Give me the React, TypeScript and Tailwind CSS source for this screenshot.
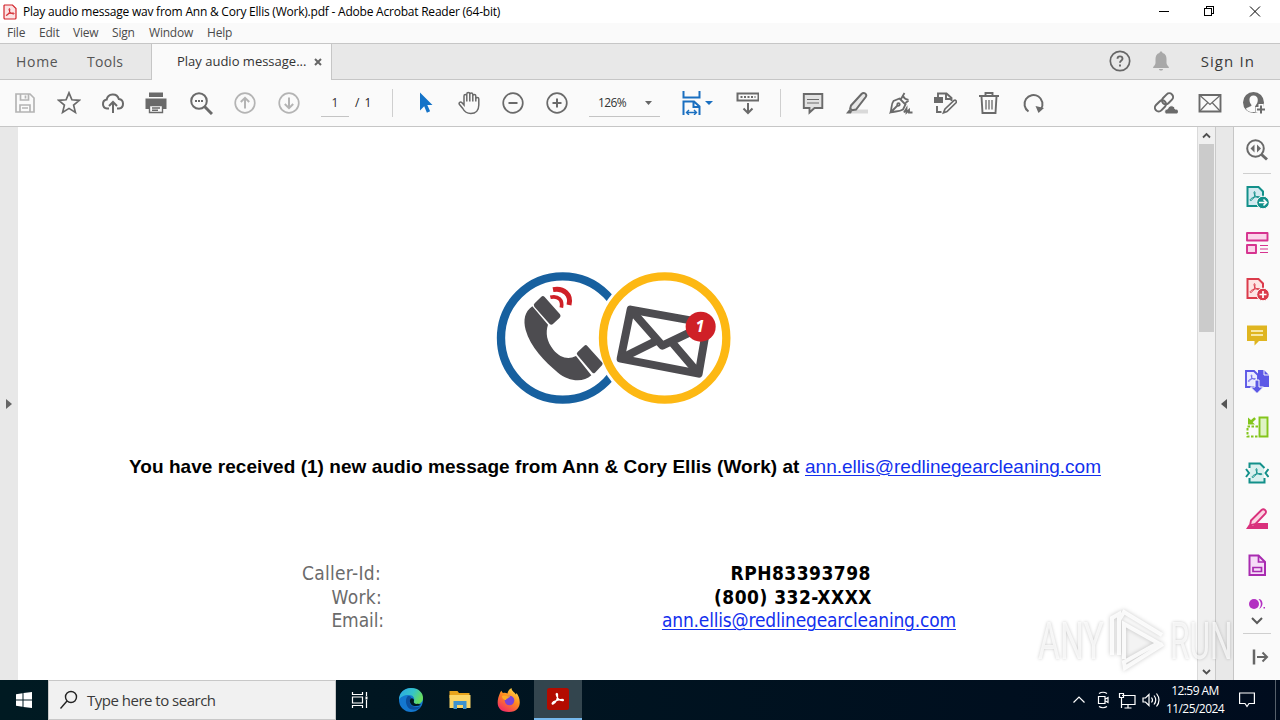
import type { ReactNode } from "react";
import clsx from "clsx";

type IconProps = {
  children: ReactNode;
  size?: number;
  className?: string;
};

// 24x24 line icon, colour comes from the text colour
const Icon = ({ children, size = 24, className }: IconProps) => (
  <svg
    width={size}
    height={size}
    viewBox="0 0 24 24"
    fill="none"
    stroke="currentColor"
    strokeWidth={1.7}
    className={clsx("shrink-0", className)}
  >
    {children}
  </svg>
);

const ToolButton = ({
  children,
  disabled = false,
  className = "text-[#6a6a6a]",
}: {
  children: ReactNode;
  disabled?: boolean;
  className?: string;
}) => (
  <button
    className={clsx(
      "flex h-full w-11 shrink-0 items-center justify-center",
      disabled ? "text-[#b4b4b4]" : className,
    )}
  >
    <Icon>{children}</Icon>
  </button>
);

const Divider = () => <div className="h-7 w-px shrink-0 bg-[#cfcfcf]" />;

const AcrobatMark = () => (
  <path
    d="M6.500 16c2.500-1.500 4.300-4.500 4-8 0-1.200-1.200-1.200-1 .2.300 3 2.300 5 5 5 1.300 0 1.300-1.200-.2-1.200-2.600 0-5.600.8-7.600 2-1.600 1.200-1.300 2.300-.2 2z"
    strokeWidth={1}
  />
);

const TitleBar = () => (
  <div className="flex h-[23px] items-center bg-white text-black">
    <svg width="14" height="16" viewBox="0 0 14 16" className="ml-[3px]">
      <path
        d="M1.500 1h8L13 4.500V14a1 1 0 0 1-1 1H2a1 1 0 0 1-1-1V1.500z"
        fill="#fbe3e4"
        stroke="#d2232a"
        strokeWidth="1.200"
      />
      <path
        d="M3.500 11.500C5.500 11 7 8 6.800 5.200c0-1-1-.8-.8.300C6.300 8 8 9.800 10.500 10c1 0 1-1-.3-1-2.300 0-4.700.6-6.300 1.500-.8.500-.8 1-.4 1z"
        fill="none"
        stroke="#d2232a"
        strokeWidth="1"
      />
    </svg>
    <span className="ml-[6px] text-[12px] tracking-[-0.22px]">
      Play audio message wav from Ann &amp; Cory Ellis (Work).pdf - Adobe
      Acrobat Reader (64-bit)
    </span>
    <svg
      width="110"
      height="20"
      viewBox="0 0 110 20"
      className="mr-[13px] ml-auto"
      fill="none"
      stroke="black"
      shapeRendering="crispEdges"
    >
      <path d="M2 9.500h10" />
      <path d="M47.500 6.500h7v7h-7zM49.500 6V4.500h7v7H55" />
      <path d="M93 4.500l10 10M103 4.500l-10 10" shapeRendering="auto" />
    </svg>
  </div>
);

const MenuBar = () => (
  <div className="flex h-5 items-center bg-[#fafafa] text-[12px] text-[#4a4a4a]">
    <span className="w-8 pl-[7px] tracking-[-0.2px]">File</span>
    <span className="w-[34px] pl-[7px] tracking-[-0.2px]">Edit</span>
    <span className="w-[39px] pl-[7px] tracking-[-0.2px]">View</span>
    <span className="w-[37px] pl-[7px] tracking-[-0.2px]">Sign</span>
    <span className="w-[58px] pl-[7px] tracking-[-0.2px]">Window</span>
    <span className="pl-[7px] tracking-[-0.2px]">Help</span>
  </div>
);

const TabBar = () => (
  <div className="flex h-[37px] border-y border-[#c6c6c6] bg-[#e8e8e8] text-[#555]">
    <div className="flex w-[151px] items-center text-[14px]">
      <span className="w-[71px] pl-4 tracking-[0.7px]">Home</span>
      <span className="pl-4 tracking-[0.3px]">Tools</span>
    </div>
    <div className="-mb-px flex w-[181px] items-center border-x border-[#c6c6c6] bg-[#fafafa] pl-[25px] text-[13px] text-[#333]">
      <span className="w-[137px] tracking-[0px]">Play audio message...</span>
      <svg width="8" height="8" viewBox="0 0 8 8" stroke="#666" strokeWidth="2">
        <path d="M1 1l6 6M7 1L1 7" />
      </svg>
    </div>
    <div className="ml-auto flex items-center pr-[25px]">
      <Icon className="mr-[17px] text-[#666]">
        <circle cx="12" cy="11" r="9.700" />
        <path
          d="M9.500 8.800c0-3.200 5-3.200 5 0 0 1.800-2.500 1.800-2.500 4M12 14.500v2"
          strokeWidth={1.900}
        />
      </Icon>
      <Icon className="mr-7 text-[#a8a8a8]">
        <path
          d="M12 1.500c-1 0-1.500.7-1.500 1.500C7.500 3.700 6.500 6 6.500 9v4c0 2-2.500 3.500-2.500 5h16c0-1.500-2.500-3-2.500-5V9c0-3-1-5.300-4-6 0-.8-.5-1.500-1.500-1.500zM10 19h4c0 2-4 2-4 0z"
          fill="currentColor"
          stroke="none"
        />
      </Icon>
      <span className="text-[15px] tracking-[1.1px] text-[#3a3a3a]">
        Sign In
      </span>
    </div>
  </div>
);

const Toolbar = () => (
  <div className="flex h-[47px] items-center border-b border-[#c6c6c6] bg-[#fafafa] pl-[3px]">
    {/* save */}
    <ToolButton disabled>
      <path d="M3 3h14l4 4v14H3zM7.500 3v6h8V3M12.500 4.500v3M7 21v-7h10v7M9 17h6" />
    </ToolButton>
    <ToolButton>
      <path d="M12 1.800l2.900 7 7.400.5-5.700 4.800 1.800 7.300L12 17.400l-6.400 4 1.800-7.300-5.700-4.800 7.400-.5z" />
    </ToolButton>
    {/* upload to cloud */}
    <ToolButton>
      <path
        d="M8 17.500H6a4.500 4.500 0 0 1-.3-8.900A6.200 6.200 0 0 1 17.800 8a4.800 4.800 0 0 1 .2 9.500h-2M12 22V11.500M8 15l4-4 4 4"
        strokeWidth={2}
      />
    </ToolButton>
    {/* print */}
    <ToolButton>
      <g transform="translate(-1 0)">
        <path d="M5 1.500h14V6H5zM1.500 7.500h21V18H19v-4H5v4H1.500z" fill="currentColor" stroke="none" />
        <path d="M5.500 14.500h13v7h-13zM8 17h8M8 19.300h6" strokeWidth={1.400} />
      </g>
    </ToolButton>
    {/* find */}
    <ToolButton>
      <circle cx="10" cy="10" r="7.800" strokeWidth={2} />
      <path d="M15.500 15.500l7.500 7.500" strokeWidth={3} />
      <path d="M6 10h2M9 10h2M12 10h2" strokeWidth={2} />
    </ToolButton>
    <ToolButton disabled>
      <circle cx="12" cy="12" r="9.800" />
      <path d="M12 17.500V7M7.800 11L12 6.800l4.200 4.200" strokeWidth={2} />
    </ToolButton>
    <ToolButton disabled>
      <circle cx="12" cy="12" r="9.800" />
      <path d="M12 6.500V17M7.800 13l4.200 4.200 4.200-4.200" strokeWidth={2} />
    </ToolButton>
    <div className="mt-px ml-[10px] h-[26px] w-7 border-b border-[#c4c4c4] pt-[3px] text-center text-[12px] text-[#333]">
      1
    </div>
    <span className="w-[43px] pl-[6px] text-[12px] tracking-[1px] whitespace-nowrap text-[#222]">
      / 1
    </span>
    <Divider />
    <div className="w-[10px]" />
    <ToolButton className="text-[#1473c8]">
      <path d="M7 1.500v18l4.200-4.300 2.700 6.500 3.200-1.400-2.800-6.300H19.500z" fill="currentColor" stroke="none" />
    </ToolButton>
    {/* hand */}
    <ToolButton>
      <path
        d="M7 14.500V5.500c0-1.900 2.800-1.900 2.800 0V11 3.500c0-2 3-2 3 0V11 4c0-2 3-2 3 0v7-5.500c0-1.900 3-1.900 3 0V11 8.500c0-1.900 3-1.900 3 0v6c0 5-3 8.500-8 8.500-4.500 0-6.500-2-8-5L2.300 13.800c-1-1.800 1.200-3 2.500-1.700z"
        strokeWidth={1.500}
        transform="translate(0 -.5)"
      />
    </ToolButton>
    <ToolButton>
      <circle cx="12" cy="12" r="9.800" />
      <path d="M7.500 12h9" strokeWidth={2} />
    </ToolButton>
    <ToolButton>
      <circle cx="12" cy="12" r="9.800" />
      <path d="M7.500 12h9M12 7.500v9" strokeWidth={2} />
    </ToolButton>
    <div className="mt-px ml-[10px] flex h-[26px] w-[71px] items-center border-b border-[#c4c4c4] pl-[9px] text-[12px] text-[#333]">
      <span className="w-[47px] tracking-[-0.6px]">126%</span>
      <svg width="7" height="4" viewBox="0 0 7 4" fill="#666">
        <path d="M0 0h7L3.500 4z" />
      </svg>
    </div>
    <div className="flex w-[65px] items-center pl-[19px] text-[#1a6fc0]">
      {/* fit width */}
      <Icon>
        <path d="M4.500 0v6.500h16V0" strokeWidth={2} />
        <path d="M4.500 24V10.500H15l5.500 5V24M14.500 10.500v5.500h6" strokeWidth={2} />
        <path d="M7.500 21.500h10M10 19l-2.500 2.500L10 24M15 19l2.500 2.500L15 24" strokeWidth={1.400} />
      </Icon>
      <svg width="8" height="4" viewBox="0 0 8 4" fill="currentColor" className="ml-[2px] shrink-0">
        <path d="M0 0h8L4 4z" />
      </svg>
    </div>
    {/* scroll mode */}
    <ToolButton>
      <path d="M2.500 2.500h21v7h-21z" strokeWidth={2} />
      <path d="M5.500 6h15" strokeWidth={2} strokeDasharray="2 1.500" />
      <path d="M13 12v9.500M8.500 17.500L13 22l4.500-4.500" strokeWidth={2} />
    </ToolButton>
    <div className="w-[11px]" />
    <Divider />
    <div className="w-[10px]" />
    <ToolButton>
      <path d="M2.800 3h18.500v14H13.500L8.500 21.500V17H2.800z" fill="#e2e2e2" strokeWidth={1.900} />
      <path d="M6 8.500h12M6 12h12" strokeWidth={1.200} />
    </ToolButton>
    {/* highlighter */}
    <ToolButton>
      <path d="M8 18.500h15v4H6z" fill="#d9d9d9" stroke="none" />
      <path d="M6 14.500L16.500 3c2.500-2.500 6 .3 4.200 3L11 18.500l-4 .7-1.800-1.700z" fill="#e6e6e6" strokeWidth={2} />
      <path d="M4.500 18l2.500 2.500L6 22.500H1z" fill="currentColor" stroke="none" />
    </ToolButton>
    {/* fountain pen */}
    <ToolButton>
      <path d="M1.500 21.500C3 17 2 13 4.500 10l6-2.500 6 6-2.500 5c-4 2.500-8 1.500-12.500 3zM12 8l3.500-6M10.500 7.500l6 6M13.500 4.500c1 2 3.500 4 6 4.500M16.500 12l3-2.500M2 21l6.500-6.500" strokeWidth={1.800} />
      <circle cx="9.500" cy="13.500" r="1.300" />
      <path d="M15 21.500l2.500-4v4l2.500-2.500v2.500h3.500" strokeWidth={1.900} />
    </ToolButton>
    {/* fill in and edit */}
    <ToolButton>
      <path d="M5 6V2.500h8.500L18.500 7v3M13 2.500V8h6M4 15v6h4.500" strokeWidth={1.900} />
      <path d="M1 6h9v6H1z" fill="currentColor" stroke="none" />
      <path d="M12 18L21 9.500c1.500-.9 3.200.8 2 2.300L14 20.500l-3.500 1.300z" fill="#fafafa" />
    </ToolButton>
    <ToolButton>
      <path d="M2 5h20M8.500 5V2h7v3M4.500 5.500l1 16.500h13l1-16.500" strokeWidth={1.900} />
      <path d="M9 9v9.500M12 9v9.500M15 9v9.500" strokeWidth={1.300} />
    </ToolButton>
    <ToolButton>
      <path d="M7.500 20.500A9 9 0 1 1 20 18" strokeWidth={2} />
      <path d="M14.500 15l8.500 2-5.500 5z" fill="currentColor" stroke="none" />
    </ToolButton>
    <div className="mr-1 ml-auto flex h-full">
      <ToolButton>
        <g transform="rotate(-45 10 11)" strokeWidth={2}>
          <rect x="-1.500" y="7.500" width="12.500" height="7.500" rx="3.700" />
          <rect x="8.500" y="7.500" width="12.500" height="7.500" rx="3.700" />
        </g>
        <path d="M12.500 23c-3-1-2-5 1-5 1.500-4.500 7-4 7.500 0 4-.2 4.300 3.500 2 5z" fill="currentColor" stroke="#fafafa" strokeWidth={1} />
      </ToolButton>
      <ToolButton>
        <path d="M1.500 4h21v16.500h-21z" strokeWidth={1.900} />
        <path d="M2 4.500L12 13.500l10-9M2 20l7.500-8M22 20L14.500 12" strokeWidth={1.200} />
      </ToolButton>
      <ToolButton>
        <circle cx="11.500" cy="11.500" r="10.500" fill="currentColor" stroke="none" />
        <path d="M11.500 4.500c-5.500 0-4.500 7-2 9.500.3 2-5 2-5.500 4 2 2.700 5 3.500 9 3v-5c0-1 1-2 1-2 2.500-2.500 3-9.500-2.500-9.500z" fill="#fafafa" stroke="none" />
        <path d="M19 13v11M13.500 18.500h11" stroke="#fafafa" strokeWidth={5} />
        <path d="M19 14.500v8M15 18.500h8" strokeWidth={2} />
      </ToolButton>
    </div>
  </div>
);

const VoicemailLogo = () => (
  <svg width="250" height="145" viewBox="0 0 750 435" className="ml-[472px]">
    <circle cx="218" cy="219" r="185" fill="white" stroke="#17609f" strokeWidth="25" />
    <circle cx="524" cy="219" r="206" fill="white" />
    <circle cx="524" cy="219" r="185" fill="white" stroke="#fdb813" strokeWidth="25" />
    {/* handset */}
    <g fill="#4d4c50">
      <path d="M134 115l20-20q5-4 10 1l46 52q4 6-1 10l-21 20q-5 3-9-1l-46-52q-4-6 1-10z" />
      <path d="M127 124l47 55c-8 24-4 50 16 75 20 24 44 31 68 19l46 58c-26 24-70 17-100-8-40-33-83-78-97-128-8-30-3-55 20-71z" />
      <path d="M263 261l20-19q5-4 9 1l44 49q4 5 0 9l-21 22q-5 4-9-1l-44-52q-4-5 1-9z" />
    </g>
    <g fill="none" stroke="#cf2027">
      <path d="M181 97c24-6 38 8 33 31" strokeWidth="11" />
      <path d="M189 74c32-6 56 14 48 46" strokeWidth="15" />
    </g>
    {/* envelope */}
    <g fill="none" stroke="#4d4c50" strokeWidth="24" strokeLinejoin="round">
      <path d="M422 134L652 175 626 326 392 281z" />
      <path d="M424 136L517 242 650 178M392 281L502 226M626 326L546 232" />
    </g>
    <circle cx="632" cy="185" r="45" fill="#cf2027" />
    <text
      x="630"
      y="202"
      fill="white"
      textAnchor="middle"
      className="font-['Open_Sans'] text-[48px] font-bold italic"
    >
      1
    </text>
  </svg>
);

const details = [
  { label: "Caller-Id:", value: "RPH83393798", labelEnd: "w-[363px]", valueEnd: "mr-[326px]" },
  { label: "Work:", value: "(800) 332-XXXX", labelEnd: "w-[364px]", valueEnd: "mr-[325px]" },
];

const Document = () => (
  <div className="w-[1179px] bg-white pt-[138px] text-black">
    <VoicemailLogo />
    <p className="mt-[43px] ml-[111px] flex h-7 items-center font-['Liberation_Sans',sans-serif] text-[19px] whitespace-nowrap">
      <b className="w-[676px] tracking-[0.05px]">
        You have received (1) new audio message from Ann &amp; Cory Ellis
        (Work) at
      </b>
      <a className="text-[#1230ee] underline decoration-1 underline-offset-2">
        ann.ellis@redlinegearcleaning.com
      </a>
    </p>
    <div className="mt-[81px] font-['DejaVu_Sans_Condensed','DejaVu_Sans',sans-serif] text-[19px] leading-[23.5px] whitespace-nowrap">
      {details.map(({ label, value, labelEnd, valueEnd }) => (
        <div key={label} className="flex justify-between">
          <span className={clsx("text-right tracking-[0.3px] text-[#6b6b6b]", labelEnd)}>
            {label}
          </span>
          <b className={clsx("tracking-[0.48px]", valueEnd)}>{value}</b>
        </div>
      ))}
      <div className="flex justify-between">
        <span className="w-[366px] text-right tracking-[-0.1px] text-[#6b6b6b]">Email:</span>
        <a className="mr-[241px] tracking-[-0.18px] text-[#1230ee] underline decoration-1 underline-offset-2">
          ann.ellis@redlinegearcleaning.com
        </a>
      </div>
    </div>
  </div>
);

const Scrollbar = () => (
  <div className="flex w-[18px] flex-col items-center border-l border-[#dadada] bg-[#f0f0f0]">
    <svg width="17" height="17" viewBox="0 0 17 17" fill="none" stroke="#505050" strokeWidth="1.800">
      <path d="M5 10.500L8.500 7l3.500 3.500" />
    </svg>
    <div className="h-[188px] w-[15px] bg-[#cbcbcb]" />
    <svg width="17" height="17" viewBox="0 0 17 17" fill="none" stroke="#505050" strokeWidth="1.800" className="mt-auto">
      <path d="M5 7l3.500 3.500L12 7" />
    </svg>
  </div>
);

const PanelTool = ({ children, className }: { children: ReactNode; className: string }) => (
  <button className={clsx("flex h-[46px] w-full items-center justify-center", className)}>
    <Icon>{children}</Icon>
  </button>
);

const ToolsPanel = () => (
  <div className="flex w-[47px] flex-col items-center border-l border-[#c6c6c6] bg-[#fafafa]">
    <PanelTool className="text-[#6a6a6a]">
      <circle cx="10.500" cy="10.500" r="8.300" strokeWidth={2} />
      <path d="M16.500 16.500l5.500 5" strokeWidth={3} />
      <path d="M9.500 6.500v8l-4-4zM12 6.500v8l4-4z" fill="currentColor" stroke="none" />
    </PanelTool>
    <div className="h-px w-7 shrink-0 bg-[#cfcfcf]" />
    {/* export */}
    <PanelTool className="text-[#12908a]">
      <path d="M2.500 2h11l4.500 4.500V21H2.500z" fill="#d3eaf0" strokeWidth={2} />
      <g transform="translate(-.5 -.5)"><AcrobatMark /></g>
      <circle cx="18" cy="17.500" r="6.300" fill="currentColor" stroke="#fafafa" strokeWidth={1} />
      <path d="M14 17.500h7M18.500 14.500l3 3-3 3" stroke="white" strokeWidth={1.600} />
    </PanelTool>
    {/* organize */}
    <PanelTool className="text-[#d6338f]">
      <path d="M2 2h20.500v7.500H2zM2 14h9v8H2z" fill="#fbd5ea" strokeWidth={1.900} strokeLinejoin="round" />
      <path d="M15 14.500h8M15 18h8M15 21.500h8" strokeWidth={1.200} />
    </PanelTool>
    {/* create */}
    <PanelTool className="text-[#db3b4b]">
      <path d="M2.500 2h11l4.500 4.500V21H2.500z" fill="#fde4e4" strokeWidth={2} />
      <g transform="translate(-.5 -.5)"><AcrobatMark /></g>
      <circle cx="18" cy="17.500" r="6.300" fill="currentColor" stroke="#fafafa" strokeWidth={1} />
      <path d="M14.500 17.500h7M18 14v7" stroke="white" strokeWidth={1.700} />
    </PanelTool>
    {/* comment */}
    <PanelTool className="text-[#dfb520]">
      <path d="M2 2.500h20v15.500h-8L9.500 22.500V18H2z" fill="currentColor" stroke="none" />
      <path d="M6 8h12M6 12h12" stroke="#fff8d0" strokeWidth={1.700} />
    </PanelTool>
    {/* combine */}
    <PanelTool className="text-[#5c58e6]">
      <path d="M13 1h6l5 5v12H13z" fill="currentColor" stroke="none" />
      <path d="M1 2h8l4 4v12H1z" fill="#ececff" strokeWidth={1.900} />
      <path d="M19 1v5h5" stroke="#fafafa" strokeWidth={1} />
      <g transform="translate(-1 .5) scale(.75)"><AcrobatMark /></g>
      <path d="M10 11h4v7h4.500L12 24.500 5.500 18H10z" fill="currentColor" stroke="#fafafa" strokeWidth={1} />
    </PanelTool>
    {/* scan layout */}
    <PanelTool className="text-[#83c51c]">
      <path d="M14.500 2.500h8V21.500h-8z" fill="#dff3c5" strokeWidth={1.900} />
      <path d="M13 11.500H2.500V21.500H13" strokeWidth={2} strokeDasharray="2.500 1.500" />
      <path d="M3 2.500v7h7l-2.300-2.300L11 4 9.300 2.300 6 5z" fill="currentColor" stroke="none" />
    </PanelTool>
    {/* compress */}
    <PanelTool className="text-[#12908a]">
      <path d="M5 3h10l4 4v14H5z" fill="#d9f0ee" stroke="none" />
      <path d="M4.500 7V2.500h10.500l4.500 4.500M4.500 17v4.500h15V17" strokeWidth={2} />
      <g transform="translate(1.500 .5)"><AcrobatMark /></g>
      <path d="M1 8l3 4-3 4M23.500 8l-3 4 3 4" strokeWidth={2} />
    </PanelTool>
    {/* redact */}
    <PanelTool className="text-[#d9317c]">
      <path d="M6 13.500L16.500 3c2.500-1.800 5.500.8 4 3.300L10.500 17 5 18.500z" fill="#fbd5e3" strokeWidth={1.900} />
      <path d="M1 22l3-4.500 3.500 1.500 5-3H23v6z" fill="currentColor" stroke="none" />
    </PanelTool>
    {/* prepare form */}
    <PanelTool className="text-[#a82bb0]">
      <path d="M4.500 2.500h9l6.500 6.500V22H4.500z" fill="#f5dcf7" strokeWidth={2} />
      <path d="M13.500 2.500v6.500h6.500M8 14.500h8.500v4H8z" strokeWidth={1.700} />
    </PanelTool>
    <div className="flex h-6 w-full items-end justify-center pb-[3px] text-[#b32fc2]">
      <svg width="18" height="10" viewBox="0 0 18 10" fill="currentColor">
        <circle cx="6" cy="5" r="5" />
        <path d="M10.500 0c5 0 5.500 8 .5 10 2.500-3 2.500-7-.5-10zM15.500 8h1.500v1.500h-1.500z" />
      </svg>
    </div>
    <div className="flex h-[21px] items-center pb-1">
      <svg width="12" height="8" viewBox="0 0 12 8" fill="none" stroke="#5a5a5a" strokeWidth="2">
        <path d="M1 1l5 5 5-5" />
      </svg>
    </div>
    <div className="h-px w-7 shrink-0 bg-[#cfcfcf]" />
    <PanelTool className="pl-[5px] text-[#666]">
      <path d="M6 4.500v15" strokeWidth={2.500} />
      <path d="M9 12h9.500M14.500 7.500L19 12l-4.500 4.500" strokeWidth={2} />
    </PanelTool>
  </div>
);

const Watermark = () => (
  <div className="absolute top-[608px] left-[1038px] flex h-[66px] items-center font-['Roboto',sans-serif] text-[51px] leading-none text-white/75 [text-shadow:0_0_4px_rgba(0,0,0,0.22)]">
    <span className="w-[70px] origin-left scale-x-[0.66]">ANY</span>
    <svg width="62" height="66" viewBox="0 0 62 66" fill="none" className="drop-shadow-[0_0_2px_rgba(0,0,0,0.25)]">
      <path d="M17 17l33 18-33 18z" fill="black" fillOpacity=".04" />
      <path d="M4 47V10l7-4v41M11 12l5-8 38 23M16 51V16l34 19-34 19 1 6 38-24" stroke="white" strokeOpacity=".85" strokeWidth="4" />
    </svg>
    <span className="w-[60px] origin-left scale-x-[0.62]">RUN</span>
  </div>
);

const EdgeIcon = () => (
  <svg width="26" height="26" viewBox="0 0 26 26">
    <defs>
      <linearGradient id="edge-top" x1="0" y1="0" x2="1" y2=".4">
        <stop offset="0" stopColor="#2aa5e8" />
        <stop offset=".6" stopColor="#35c4c8" />
        <stop offset="1" stopColor="#66dc60" />
      </linearGradient>
    </defs>
    <circle cx="13" cy="13" r="12" fill="#1377cf" />
    <path d="M1 13C1 5 7 1 13 1c8 0 12 5 12 10 0 4-3 6-6 6s-4-1-3-3c1-3-1-6-5-6-5 0-9 2-10 5z" fill="url(#edge-top)" />
    <path d="M10 9c-3 2-3 10 2 13 5 2 9 0 11-3-2 1-5 1.500-8 .3-3.500-1.500-4-5-2-7.300 1-1.500-1-3.500-3-3z" fill="#0b4f9e" />
    <path d="M12.500 12c-1.500 2.500 0 5 2 6.500 3 1 6 .5 8.500-.7l-3-1c-3 .5-5-.5-4-3 .4-2-2.500-3.500-3.500-1.800z" fill="#001820" />
  </svg>
);

const ExplorerIcon = () => (
  <svg width="22" height="22" viewBox="0 0 22 22">
    <path d="M.5 2h8l1.500 2h10.500v5H.5z" fill="#e8a41c" />
    <path d="M.5 6h21v13H.5z" fill="#fcd667" />
    <path d="M4.500 20v-8h13v8H14v-4H8v4z" fill="#3f93cf" />
  </svg>
);

const FirefoxIcon = () => (
  <svg width="24" height="26" viewBox="0 0 24 26">
    <defs>
      <linearGradient id="fx" x1=".8" y1="0" x2=".2" y2="1">
        <stop offset="0" stopColor="#ffe04a" />
        <stop offset=".45" stopColor="#ff8a1f" />
        <stop offset="1" stopColor="#f0246a" />
      </linearGradient>
    </defs>
    <path d="M3 6c.3-1 1-2 1.500-2.300.2 1 .7 1.600 1.500 2.300 2-.3 3-.2 4.500.5.300-2.500 2-4.500 4-5.500 0 3 3 4 4.500 6.500l.5-1.500c5 6 5.500 19-7.500 19S-1 15 3 6z" fill="url(#fx)" />
    <circle cx="12.500" cy="13.500" r="4.800" fill="#7a43d8" />
    <path d="M5 9c3-1.500 4 1 8 0 0 2-3.500 2-4 4-2-.2-4-1-4-4z" fill="#ffac25" />
  </svg>
);

const Taskbar = () => (
  <div className="flex h-10 items-center bg-gradient-to-r from-[#001a22] to-[#000c1e] text-white">
    <div className="flex w-12 justify-center">
      <svg width="16" height="16" viewBox="0 0 16 16" fill="white">
        <path d="M0 2.300l6.500-1v6.200H0zM7.500 1.100L16 0v7.500H7.500zM0 8.500h6.500v6.200L0 13.700zM7.500 8.500H16V16l-8.500-1.100z" />
      </svg>
    </div>
    <div className="flex h-full w-72 items-center border border-[#c8c8c8] bg-[#f1f1f1] pl-[11px] text-[#3a3a3a]">
      <svg width="18" height="20" viewBox="0 0 18 20" fill="none" stroke="#222" strokeWidth="1.400">
        <circle cx="11" cy="7" r="5.500" />
        <path d="M7 11l-6.500 7.500" />
      </svg>
      <span className="ml-[9px] text-[15px] tracking-[-0.5px]">
        Type here to search
      </span>
    </div>
    <div className="flex w-12 justify-center">
      <svg width="18" height="16" viewBox="0 0 18 16" fill="none" stroke="white" strokeWidth="1.200">
        <path d="M1.500 0v2.500h10V0M1.500 5h10v6h-10zM1.500 16v-2.500h10V16M15.500 0v4M15.500 8v8" />
        <path d="M14.500 4.500h2v3h-2z" fill="white" stroke="none" />
      </svg>
    </div>
    <div className="flex w-[54px] justify-center">
      <EdgeIcon />
    </div>
    <div className="flex w-11 justify-center">
      <ExplorerIcon />
    </div>
    <div className="flex w-[52px] justify-center pl-[2px]">
      <FirefoxIcon />
    </div>
    <div className="flex h-full w-12 items-center justify-center border-b-2 border-[#76b9ed] bg-[#33454e]">
      <svg width="22" height="22" viewBox="0 0 22 22">
        <rect width="22" height="22" rx="2.500" fill="#b30b00" />
        <path d="M6 16c3-2 5-5.500 4.500-9.500-.2-1.500-1.500-1.200-1.200.2.700 3.300 3 5.800 6.200 6 1.300 0 1.200-1.400-.3-1.400-3 0-6.200 1-8.900 2.600-1.500 1.200-1.500 2.300-.3 2.100z" fill="none" stroke="white" strokeWidth="1.300" />
      </svg>
    </div>
    <div className="ml-auto flex h-full items-center">
      <svg width="92" height="20" viewBox="0 0 92 20" fill="none" stroke="white" strokeWidth="1.200">
        <path d="M1.500 12.500L7 7l5.500 5.500" />
        {/* meet now */}
        <path d="M26.500 6.500h6.500v7h-6.500zM33.500 9l2.500-1.500v5L33.500 11M27 3.500q4-2.500 8 0M27 16.500q4 2.500 8 0" />
        {/* network */}
        <path d="M50 5.500h13v9H50M56 15v3M52.500 18h7M47.500 3.500h4v4h-4zM49.500 7.500V18" />
        {/* volume */}
        <path d="M71 8h2.500L77 4.500v11L73.500 12H71zM79.500 7.500q2 2.500 0 5M82 5.500q3.500 4.500 0 9M84.500 3.500q5 6.500 0 13" />
      </svg>
      <div className="w-[62px] text-center text-[12px] leading-[18px] tracking-[-0.55px] whitespace-nowrap">
        <div>12:59 AM</div>
        <div>11/25/2024</div>
      </div>
      <svg width="16" height="16" viewBox="0 0 16 16" fill="none" stroke="white" strokeWidth="1.200" className="mr-5 ml-[13px]">
        <path d="M.6 1h14.800v10.500H10L8 14.500l-2-3H.6z" />
      </svg>
      <div className="mr-1 h-full w-px bg-[#56606b]" />
    </div>
  </div>
);

const App = () => {
  return (
    <div className="relative flex h-[720px] w-[1280px] flex-col overflow-hidden bg-white font-['Open_Sans','Noto_Sans',sans-serif]">
      <TitleBar />
      <MenuBar />
      <TabBar />
      <Toolbar />
      <div className="flex min-h-0 flex-1">
        <div className="flex w-[18px] items-center bg-[#e8e8e8] pl-[6px]">
          <svg width="7" height="10" viewBox="0 0 7 10" fill="#666">
            <path d="M0 0v10l6-5z" />
          </svg>
        </div>
        <Document />
        <Scrollbar />
        <div className="flex w-[18px] items-center border-l border-[#c9c9c9] bg-[#e8e8e8] pl-[4px]">
          <svg width="7" height="10" viewBox="0 0 7 10" fill="#555">
            <path d="M7 0v10L1 5z" />
          </svg>
        </div>
        <ToolsPanel />
      </div>
      <Taskbar />
      <Watermark />
    </div>
  );
};

export default App;
